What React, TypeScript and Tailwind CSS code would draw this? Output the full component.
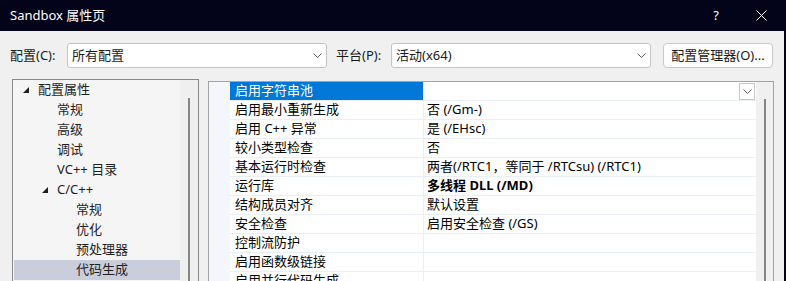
import React from 'react';

const FONT = { fontFamily: '"Noto Sans", "Noto Sans CJK SC", sans-serif' };

type TreeItem = { label: string; level: number; expanded?: boolean; selected?: boolean };

const treeItems: TreeItem[] = [
  { label: '配置属性', level: 0, expanded: true },
  { label: '常规', level: 1 },
  { label: '高级', level: 1 },
  { label: '调试', level: 1 },
  { label: 'VC++ 目录', level: 1 },
  { label: 'C/C++', level: 1, expanded: true },
  { label: '常规', level: 2 },
  { label: '优化', level: 2 },
  { label: '预处理器', level: 2 },
  { label: '代码生成', level: 2, selected: true },
];

const props: { name: string; value: string; bold?: boolean; selected?: boolean }[] = [
  { name: '启用字符串池', value: '', selected: true },
  { name: '启用最小重新生成', value: '否 (/Gm-)' },
  { name: '启用 C++ 异常', value: '是 (/EHsc)' },
  { name: '较小类型检查', value: '否' },
  { name: '基本运行时检查', value: '两者(/RTC1，等同于 /RTCsu) (/RTC1)' },
  { name: '运行库', value: '多线程 DLL (/MD)', bold: true },
  { name: '结构成员对齐', value: '默认设置' },
  { name: '安全检查', value: '启用安全检查 (/GS)' },
  { name: '控制流防护', value: '' },
  { name: '启用函数级链接', value: '' },
  { name: '启用并行代码生成', value: '' },
];

const Chevron = () => (
  <svg width="9" height="5" viewBox="0 0 9 5">
    <path d="M0.5 0.5 L4.5 4.5 L8.5 0.5" fill="none" stroke="#5f5f5f" strokeWidth="1" />
  </svg>
);

const Expander = () => (
  <svg width="6" height="6" viewBox="0 0 6 6">
    <polygon points="6,0 6,6 0,6" fill="#1e1e1e" />
  </svg>
);

const Combo = ({ text }: { text: string }) => (
  <div className="w-[260px] h-[25px] bg-white border border-[#c4c4c4] rounded-[3px] flex items-center justify-between pl-[4px] pr-[4px]">
    <span className="text-[13px] text-[#1a1a1a]">{text}</span>
    <Chevron />
  </div>
);

export default function App() {
  return (
    <div className="w-[786px] h-[281px] overflow-hidden bg-[#03031a] flex flex-col" style={FONT}>
      {/* title bar */}
      <div className="h-[31px] shrink-0 flex items-center pl-[10px] text-white text-[13px]">
        <span className="flex-1">Sandbox 属性页</span>
        <span className="w-[20px] text-center mr-[30px]">?</span>
        <svg width="11" height="11" viewBox="0 0 11 11" className="mr-[19px]">
          <path d="M0.5 0.5 L10.5 10.5 M10.5 0.5 L0.5 10.5" stroke="#ffffff" strokeWidth="1" />
        </svg>
      </div>

      {/* body */}
      <div className="flex-1 bg-[#f0f0f0] mr-[2px] flex flex-col overflow-hidden">
        <div className="flex items-center h-[25px] mt-[12px] shrink-0 text-[13px] text-[#1a1a1a]">
          <span className="w-[67px] pl-[10px] shrink-0">配置(C):</span>
          <Combo text="所有配置" />
          <span className="w-[64px] pl-[9px] shrink-0">平台(P):</span>
          <Combo text="活动(x64)" />
          <div className="ml-[12px] w-[110px] h-[25px] bg-[#fdfdfd] border border-[#c9c9c9] rounded-[4px] flex items-center justify-center">
            配置管理器(O)...
          </div>
        </div>

        <div className="flex mt-[11px] pl-[12px] gap-[9px] h-[300px] shrink-0">
          {/* tree */}
          <div className="w-[187px] h-full border border-[#898989] bg-[#f5f5f5] flex">
            <div className="flex-1 flex flex-col">
              {treeItems.map((it, i) => (
                <div
                  key={i}
                  className={`h-[20px] flex items-center ml-[1px] text-[13px] text-[#1e1e1e] ${it.selected ? 'bg-[#cacddb]' : ''}`}
                  style={{ paddingLeft: 9 + it.level * 19 }}
                >
                  <span className="w-[15px] shrink-0 flex items-center">{it.expanded ? <Expander /> : null}</span>
                  <span>{it.label}</span>
                </div>
              ))}
            </div>
            <div className="w-[18px] bg-[#efefef] pt-[18px] flex justify-center">
              <div className="w-[2px] h-full bg-[#858585]" />
            </div>
          </div>

          {/* property grid */}
          <div className="w-[566px] h-full mt-[2px] border border-[#a3a3a3] flex">
            <div className="w-[21px] bg-[#f3f6fb]" />
            <div className="w-[526px] bg-white flex flex-col">
              {props.map((p, i) => (
                <div key={i} className="h-[19px] flex border-b border-[#eaeef5] text-[13px] text-black">
                  <div
                    className={`w-[194px] shrink-0 flex items-center pl-[5px] border-r border-[#eaeef5] ${p.selected ? 'bg-[#0078d7] text-white' : ''}`}
                  >
                    {p.name}
                  </div>
                  <div className={`flex-1 flex items-center pl-[3px] ${p.bold ? 'font-bold' : ''}`}>
                    <span className="flex-1">{p.value}</span>
                    {p.selected ? (
                      <div className="w-[16px] h-[17px] mr-[1px] bg-white border border-[#c8c8c8] flex items-center justify-center">
                        <Chevron />
                      </div>
                    ) : null}
                  </div>
                </div>
              ))}
            </div>
            <div className="flex-1 bg-[#f0f0f0] pt-[17px] flex justify-center">
              <div className="w-[2px] h-full bg-[#858585]" />
            </div>
          </div>
        </div>
      </div>
    </div>
  );
}
